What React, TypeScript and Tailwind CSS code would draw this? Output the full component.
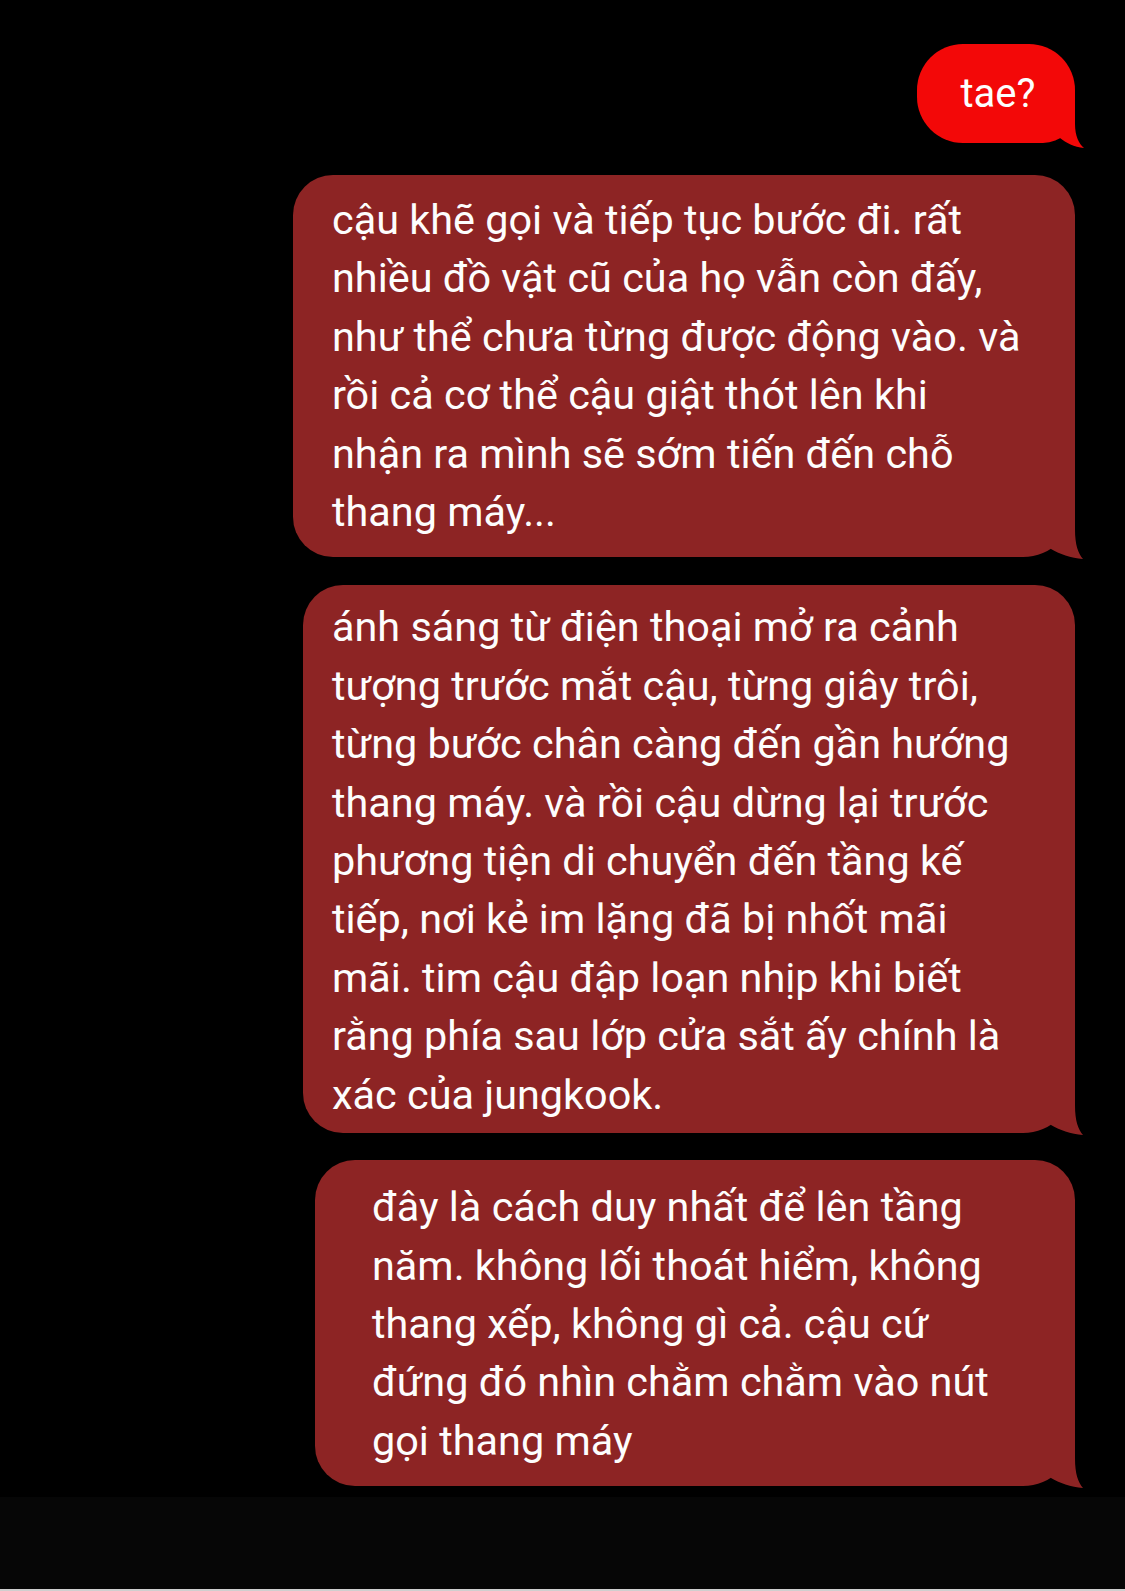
const BUBBLE = '#8d2424'

const MESSAGES = [
  {
    width: 'w-[782px]',
    pad: 'pl-[39px] pt-[16px] pb-[16px]',
    mt: 'mt-[32px]',
    lines: [
      'cậu khẽ gọi và tiếp tục bước đi. rất',
      'nhiều đồ vật cũ của họ vẫn còn đấy,',
      'như thể chưa từng được động vào. và',
      'rồi cả cơ thể cậu giật thót lên khi',
      'nhận ra mình sẽ sớm tiến đến chỗ',
      'thang máy...',
    ],
  },
  {
    width: 'w-[772px]',
    pad: 'pl-[29px] pt-[13px] pb-[9px]',
    mt: 'mt-[28px]',
    lines: [
      'ánh sáng từ điện thoại mở ra cảnh',
      'tượng trước mắt cậu, từng giây trôi,',
      'từng bước chân càng đến gần hướng',
      'thang máy. và rồi cậu dừng lại trước',
      'phương tiện di chuyển đến tầng kế',
      'tiếp, nơi kẻ im lặng đã bị nhốt mãi',
      'mãi. tim cậu đập loạn nhịp khi biết',
      'rằng phía sau lớp cửa sắt ấy chính là',
      'xác của jungkook.',
    ],
  },
  {
    width: 'w-[760px]',
    pad: 'pl-[57px] pt-[18px] pb-[16px]',
    mt: 'mt-[27px]',
    lines: [
      'đây là cách duy nhất để lên tầng',
      'năm. không lối thoát hiểm, không',
      'thang xếp, không gì cả. cậu cứ',
      'đứng đó nhìn chằm chằm vào nút',
      'gọi thang máy',
    ],
  },
]

function Tail({ color }: { color: string }) {
  return (
    <svg
      className="absolute right-[-12px] bottom-[-2px]"
      width="44"
      height="60"
      viewBox="0 0 44 60"
    >
      <path d="M32 0 L32 30 C32 46 35 54 40 60 C28 59 16 55 8 50 L8 0 Z" fill={color} />
    </svg>
  )
}

function SmallTail({ color }: { color: string }) {
  return (
    <svg
      className="absolute right-[-10px] bottom-[-5px]"
      width="36"
      height="44"
      viewBox="0 0 36 44"
    >
      <path d="M26 0 L26 20 C26 32 30 40 35 44 C25 43 17 39 11 34 L11 0 Z" fill={color} />
    </svg>
  )
}

export default function App() {
  return (
    <div
      className="w-[1125px] h-[1591px] bg-black flex flex-col text-[#fdfdfd]"
      style={{ fontFamily: 'Roboto, "Noto Sans", sans-serif' }}
    >
      <div className="flex flex-col items-end pr-[50px] pt-[44px]">
        <div className="relative h-[99px] w-[158px] rounded-[46px] rounded-br-[32px] bg-[#f30808] flex items-center justify-center">
          <span className="relative pl-[4px] text-[40px] leading-none">tae?</span>
          <SmallTail color="#f30808" />
        </div>

        {MESSAGES.map((m, i) => (
          <div
            key={i}
            className={`relative ${m.width} ${m.pad} ${m.mt} rounded-[40px] rounded-br-[52px] bg-[#8d2424]`}
          >
            <Tail color={BUBBLE} />
            <div className="relative text-[41.4px] leading-[58.4px] whitespace-nowrap">
              {m.lines.map((l) => (
                <div key={l}>{l}</div>
              ))}
            </div>
          </div>
        ))}
      </div>

      <div className="mt-auto h-[94px] bg-[#060606] border-b-2 border-[#cfcfcf]" />
    </div>
  )
}
